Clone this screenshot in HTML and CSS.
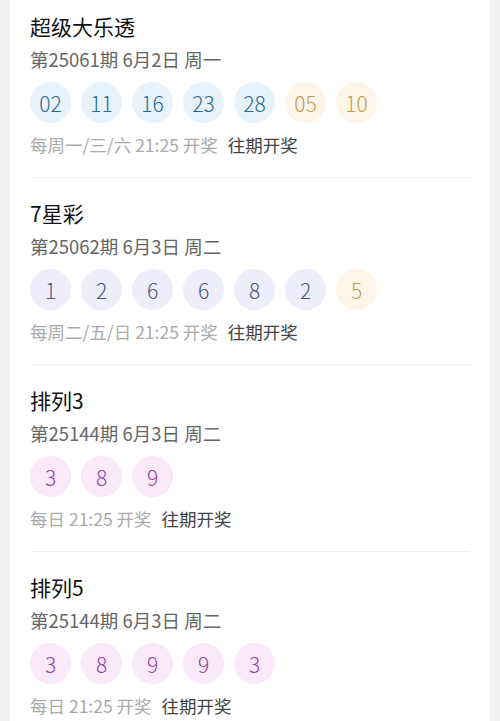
FILE: index.html
```html
<!DOCTYPE html>
<html lang="zh-CN">
<head>
  <meta charset="UTF-8">
  <meta name="viewport" content="width=device-width, initial-scale=1.0">
  <title>开奖公告</title>
  <link rel="stylesheet" href="styles.css">
</head>
<body>
  <div class="card">
    <!-- 超级大乐透 -->
    <div class="lottery first">
      <div class="lottery-name">超级大乐透</div>
      <div class="lottery-issue">第25061期 6月2日 周一</div>
      <div class="balls">
        <span class="ball blue">02</span>
        <span class="ball blue">11</span>
        <span class="ball blue">16</span>
        <span class="ball blue">23</span>
        <span class="ball blue">28</span>
        <span class="ball gold">05</span>
        <span class="ball gold">10</span>
      </div>
      <div class="lottery-foot">
        <span class="schedule">每周一/三/六 21:25 开奖</span>
        <a class="history" href="#">往期开奖</a>
      </div>
    </div>

    <!-- 7星彩 -->
    <div class="lottery">
      <div class="lottery-name">7星彩</div>
      <div class="lottery-issue">第25062期 6月3日 周二</div>
      <div class="balls">
        <span class="ball lilac">1</span>
        <span class="ball lilac">2</span>
        <span class="ball lilac">6</span>
        <span class="ball lilac">6</span>
        <span class="ball lilac">8</span>
        <span class="ball lilac">2</span>
        <span class="ball gold">5</span>
      </div>
      <div class="lottery-foot">
        <span class="schedule">每周二/五/日 21:25 开奖</span>
        <a class="history" href="#">往期开奖</a>
      </div>
    </div>

    <!-- 排列3 -->
    <div class="lottery">
      <div class="lottery-name">排列3</div>
      <div class="lottery-issue">第25144期 6月3日 周二</div>
      <div class="balls">
        <span class="ball pink">3</span>
        <span class="ball pink">8</span>
        <span class="ball pink">9</span>
      </div>
      <div class="lottery-foot">
        <span class="schedule">每日 21:25 开奖</span>
        <a class="history" href="#">往期开奖</a>
      </div>
    </div>

    <!-- 排列5 -->
    <div class="lottery">
      <div class="lottery-name">排列5</div>
      <div class="lottery-issue">第25144期 6月3日 周二</div>
      <div class="balls">
        <span class="ball pink">3</span>
        <span class="ball pink">8</span>
        <span class="ball pink">9</span>
        <span class="ball pink">9</span>
        <span class="ball pink">3</span>
      </div>
      <div class="lottery-foot">
        <span class="schedule">每日 21:25 开奖</span>
        <a class="history" href="#">往期开奖</a>
      </div>
    </div>
  </div>
</body>
</html>
```

FILE: styles.css
```css
body {
  margin: 0;
  padding: 0 10px;
  background: #f1f1f1;
  font-family: "Noto Sans CJK SC", "Noto Sans", sans-serif;
  height: 721px;
  overflow: hidden;
}
.card {
  background: #fff;
  padding: 0 20px;
  min-height: 100%;
}
.lottery {
  padding: 20px 0 20px;
  border-top: 1px solid #efefef;
}
.lottery.first {
  padding-top: 11px;
  border-top: none;
}
.lottery-name {
  font-size: 21px;
  line-height: 30px;
  color: #111;
}
.lottery-issue {
  margin-top: 5px;
  font-size: 18.5px;
  line-height: 26px;
  color: #666;
}
.balls {
  display: flex;
  gap: 10px;
  margin-top: 10px;
}
.ball {
  width: 41px;
  height: 41px;
  border-radius: 50%;
  display: flex;
  align-items: center;
  justify-content: center;
  font-size: 21px;
  font-weight: 300;
}
.ball.blue {
  background: #e8f2fb;
  color: #2a6a8a;
}
.ball.gold {
  background: #fdf5e7;
  color: #c29a52;
}
.ball.lilac {
  background: #eeeefa;
  color: #4c5283;
}
.ball.pink {
  background: #f9e9f9;
  color: #9343a2;
}
.lottery-foot {
  margin-top: 10px;
  font-size: 17.5px;
  line-height: 24px;
}
.schedule {
  color: #aaa;
}
.history {
  margin-left: 6px;
  color: #444;
  text-decoration: none;
}
```
